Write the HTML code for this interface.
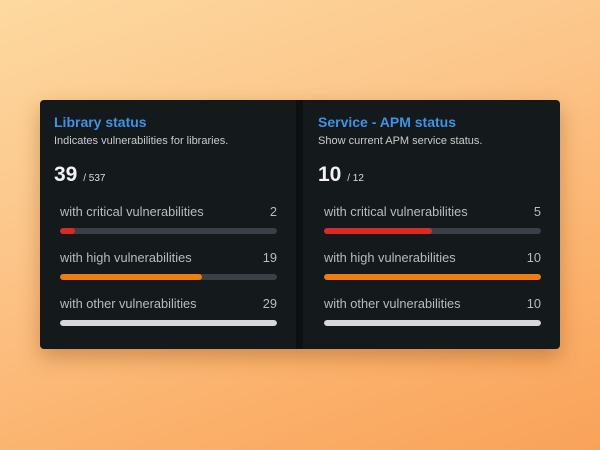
<!DOCTYPE html>
<html><head><style>
*{margin:0;padding:0;box-sizing:border-box}
body{width:600px;height:450px;overflow:hidden;font-family:"Liberation Sans",sans-serif;
background:linear-gradient(160deg,#fdd9a0 0%,#fcc488 40%,#fbb06a 75%,#f9a25a 100%);position:relative}
.card{position:absolute;left:40px;top:100px;width:520px;height:249px;background:#14191c;border-radius:4px;box-shadow:0 8px 20px rgba(120,60,10,.35)}
.div{position:absolute;left:256px;top:0;width:7px;height:249px;background:#0c1012}
.p{position:absolute;top:0;width:240px;height:249px;white-space:nowrap}
.t{position:absolute;color:#3f92e6;font-weight:bold;font-size:14px;top:14px;left:0}
.s{position:absolute;color:#c8ccd0;font-size:11px;top:35px;left:0}
.n{position:absolute;color:#f2f2f2;font-size:21px;font-weight:bold;top:63px;left:0}
.n span{font-size:10px;font-weight:normal;color:#ddd}
.r{position:absolute;width:217px;font-size:12.8px;color:#b8bcc0}
.r .v{position:absolute;right:0;top:0}
.b{position:absolute;top:24px;left:0;width:217px;height:6px;border-radius:3px;background:#3a4048;overflow:hidden}
.b i{display:block;height:100%;border-radius:3px}
</style></head><body>
<div class="card">
<div class="div"></div>
<div class="p" style="left:14px">
<div class="t">Library status</div>
<div class="s">Indicates vulnerabilities for libraries.</div>
<div class="n">39 <span>/ 537</span></div>
<div class="r" style="left:6px;top:104px">with critical vulnerabilities<span class="v">2</span><div class="b"><i style="width:15px;background:#d92b26"></i></div></div>
<div class="r" style="left:6px;top:150px">with high vulnerabilities<span class="v">19</span><div class="b"><i style="width:142px;background:#ef7d12"></i></div></div>
<div class="r" style="left:6px;top:196px">with other vulnerabilities<span class="v">29</span><div class="b"><i style="width:217px;background:#d6d8da"></i></div></div>
</div>
<div class="p" style="left:278px">
<div class="t">Service - APM status</div>
<div class="s">Show current APM service status.</div>
<div class="n">10 <span>/ 12</span></div>
<div class="r" style="left:6px;top:104px">with critical vulnerabilities<span class="v">5</span><div class="b"><i style="width:108px;background:#d92b26"></i></div></div>
<div class="r" style="left:6px;top:150px">with high vulnerabilities<span class="v">10</span><div class="b"><i style="width:217px;background:#ef7d12"></i></div></div>
<div class="r" style="left:6px;top:196px">with other vulnerabilities<span class="v">10</span><div class="b"><i style="width:217px;background:#d6d8da"></i></div></div>
</div>
</div>
</body></html>
